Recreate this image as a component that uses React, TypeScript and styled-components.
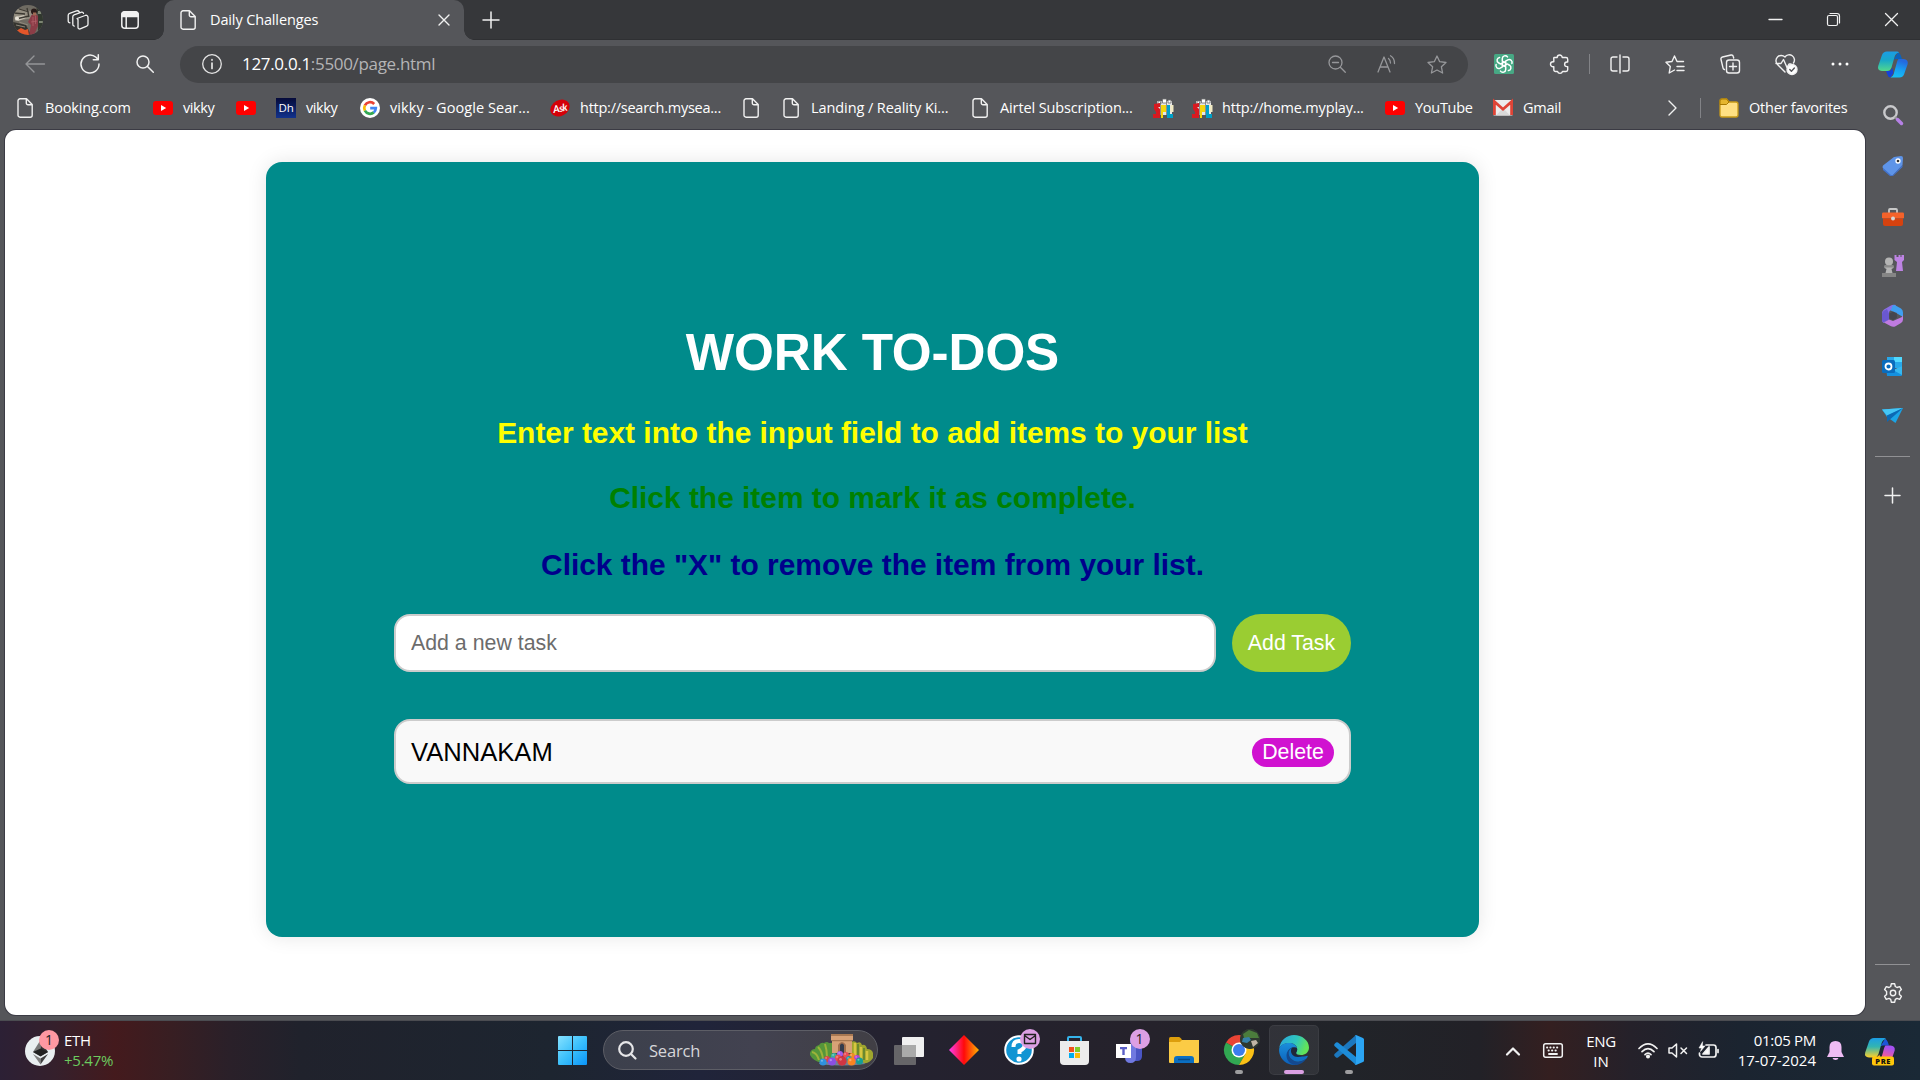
import React from "react";
import styled, { createGlobalStyle } from "styled-components";

const Global = createGlobalStyle`
  * { box-sizing: border-box; }
  html, body { margin: 0; padding: 0; overflow: hidden; }
  body { font-family: "Open Sans", "Noto Sans", sans-serif; color: #fff; background: #55565a; }
  svg { display: block; flex: none; overflow: visible; }
`;

const Screen = styled.div`
  width: 1920px;
  height: 1080px;
  display: flex;
  flex-direction: column;
  background: #55565a;
`;

/* ---------- title bar ---------- */
const TitleBar = styled.div`
  height: 40px;
  flex: none;
  display: flex;
  background: #36373a;
  border-bottom: 1px solid #2f3033;
`;
const TitleTools = styled.div`
  width: 164px;
  padding-left: 2px;
  display: flex;
`;
const Cell = styled.div<{ $w: number }>`
  width: ${(p) => p.$w}px;
  flex: none;
  display: flex;
  align-items: center;
  justify-content: center;
`;
const Tab = styled.div`
  position: relative;
  width: 300px;
  height: 40px;
  display: flex;
  align-items: center;
  padding: 0 14px 0 16px;
  background: #55565a;
  border-radius: 10px 10px 0 0;
  &::before,
  &::after {
    content: "";
    position: absolute;
    bottom: 0;
    width: 10px;
    height: 10px;
  }
  &::before { left: -10px; background: radial-gradient(circle at 0 0, transparent 9.5px, #55565a 10px); }
  &::after { right: -10px; background: radial-gradient(circle at 100% 0, transparent 9.5px, #55565a 10px); }
`;
const TabTitle = styled.span`
  flex: 1;
  margin-left: 14px;
  font-size: 14.5px;
  letter-spacing: -0.13px;
  line-height: 20px;
  white-space: nowrap;
`;
const Spacer = styled.div`
  flex: 1;
`;

/* ---------- toolbar ---------- */
const ToolBar = styled.div`
  height: 47px;
  flex: none;
  display: flex;
  align-items: center;
  padding: 1px 0 0 7px;
`;
const AddressBar = styled.div`
  width: 1288px;
  height: 37px;
  margin: 0 8px;
  border-radius: 19px;
  background: #444548;
  display: flex;
  align-items: center;
  padding: 0 6px 0 22px;
`;
const Url = styled.span`
  margin: -1px 0 0 20px;
  font-size: 17px;
  line-height: 24px;
  letter-spacing: -0.32px;
  color: #b4b4b6;
  white-space: nowrap;
  b { font-weight: 400; color: #fff; }
`;
const VRule = styled.div<{ $m?: number }>`
  width: 1px;
  height: 20px;
  margin: 0 ${(p) => p.$m ?? 2}px;
  background: #828387;
`;

/* ---------- bookmarks ---------- */
const Bookmarks = styled.div`
  height: 43px;
  flex: none;
  display: flex;
  align-items: center;
  padding: 0 0 1px 15px;
`;
const Bookmark = styled.div<{ $w: number }>`
  width: ${(p) => p.$w}px;
  flex: none;
  display: flex;
  align-items: center;
`;
const BookmarkIcon = styled.span`
  width: 20px;
  flex: none;
  display: flex;
  justify-content: center;
`;
const BookmarkName = styled.span<{ $ls?: number }>`
  margin-left: 10px;
  font-size: 14.5px;
  line-height: 20px;
  letter-spacing: ${(p) => p.$ls ?? -0.4}px;
  white-space: nowrap;
`;
const SiteTile = styled.span`
  width: 20px;
  height: 20px;
  background: linear-gradient(#060b3a, #12328c);
  font-size: 11.5px;
  line-height: 19px;
  letter-spacing: -0.2px;
  text-align: center;
`;

/* ---------- page ---------- */
const Body = styled.div`
  flex: 1;
  display: flex;
  padding: 0 0 5px 5px;
`;
const Page = styled.main`
  width: 1860px;
  height: 885px;
  flex: none;
  background: #fff;
  border-radius: 11px;
  box-shadow: 0 0 0 1px #3b3b44;
  padding: 32px 0 0 261px;
  font-family: "Liberation Sans", Arial, sans-serif;
`;
const Card = styled.section`
  width: 1213px;
  height: 775px;
  padding: 162px 128px 0;
  border-radius: 16px;
  background: #008b8b;
  box-shadow: 0 0 20px rgba(0, 0, 0, 0.1);
  display: flex;
  flex-direction: column;
`;
const Heading = styled.h1`
  margin: 0;
  font-size: 51.2px;
  line-height: 58px;
  letter-spacing: -0.1px;
  text-align: center;
  color: #fff;
`;
const Hint = styled.h3<{ $color: string; $top: number }>`
  margin: ${(p) => p.$top}px 0 0;
  font-size: 29.95px;
  line-height: 36px;
  letter-spacing: -0.02px;
  text-align: center;
  color: ${(p) => p.$color};
`;
const TaskForm = styled.div`
  display: flex;
  gap: 16px;
  margin-top: 31px;
  height: 58px;
`;
const TaskInput = styled.input`
  width: 822px;
  padding: 0 15px;
  border: 2px solid #ccc;
  border-radius: 16px;
  background: #fff;
  font-family: inherit;
  font-size: 21.33px;
  &::placeholder { color: #6c6c6c; opacity: 1; }
`;
const AddButton = styled.button`
  width: 119px;
  padding: 0;
  border: 0;
  border-radius: 29px;
  background: #9acd32;
  color: #fff;
  font-family: inherit;
  font-size: 21.33px;
  white-space: nowrap;
`;
const TaskItem = styled.div`
  margin-top: 47px;
  height: 65px;
  padding: 1px 15px 0;
  border: 2px solid #ccc;
  border-radius: 16px;
  background: #f9f9f9;
  color: #000;
  font-size: 25.6px;
  display: flex;
  align-items: center;
  justify-content: space-between;
`;
const DeleteButton = styled.button`
  width: 82px;
  height: 29px;
  padding: 0;
  border: 0;
  border-radius: 16px;
  background: #d012d0;
  color: #fff;
  font-family: inherit;
  font-size: 21.33px;
  line-height: 27px;
`;

/* ---------- side bar ---------- */
const SideBar = styled.aside`
  flex: 1;
  display: flex;
  flex-direction: column;
  align-items: center;
  margin: -40px 0 -5px;
`;
const SideCell = styled.div<{ $h: number }>`
  height: ${(p) => p.$h}px;
  flex: none;
  display: flex;
  align-items: center;
`;
const HRule = styled.div`
  width: 35px;
  height: 1px;
  background: #919194;
`;

/* ---------- task bar ---------- */
const TaskBar = styled.footer`
  height: 60px;
  flex: none;
  display: flex;
  border-top: 1px solid #4b4c51;
  background: linear-gradient(90deg, #2c2035 0, #35202c 55px, #441a1d 115px, #381e22 170px, #2a2029 230px, #20222c 300px, #1d2530 550px, #20243a 700px, #242230 880px, #25222b 1150px, #212429 1340px, #222127 1480px, #341f20 1550px, #25212a 1630px, #1b2430 1740px, #1a2936 1920px);
`;
const Widget = styled.div`
  width: 546px;
  display: flex;
  align-items: center;
  padding: 0 0 0 25px;
`;
const Stack = styled.div<{ $w: number; $right?: boolean }>`
  width: ${(p) => p.$w}px;
  flex: none;
  display: flex;
  flex-direction: column;
  justify-content: center;
  align-items: ${(p) => (p.$right ? "flex-end" : "center")};
  font-size: 15px;
  line-height: 20px;
  padding-bottom: ${(p) => (p.$right ? 1 : 0)}px;
  white-space: nowrap;
`;
const Ticker = styled.div`
  margin: 0 0 2px 9px;
  font-size: 15px;
  line-height: 20px;
  letter-spacing: -0.25px;
  em { display: block; font-style: normal; color: #6ccb5f; }
`;
const Line = styled.span<{ $ls: number }>`
  letter-spacing: ${(p) => p.$ls}px;
`;
const BadgeHost = styled.span`
  position: relative;
  display: flex;
`;
const Badge = styled.span<{ $bg: string; $x: number; $y: number }>`
  position: absolute;
  left: ${(p) => p.$x}px;
  top: ${(p) => p.$y}px;
  width: 20px;
  height: 20px;
  border-radius: 50%;
  background: ${(p) => p.$bg};
  color: #222;
  font-size: 14px;
  line-height: 20px;
  text-align: center;
  display: flex;
  align-items: center;
  justify-content: center;
`;
const AppSlot = styled.div<{ $active?: boolean }>`
  position: relative;
  width: 50px;
  height: 50px;
  margin: 4px 2.5px 0;
  flex: none;
  display: flex;
  align-items: center;
  justify-content: center;
  border-radius: 5px;
  background: ${(p) => (p.$active ? "rgba(255,255,255,.07)" : "none")};
  box-shadow: ${(p) => (p.$active ? "inset 0 0 0 1px rgba(255,255,255,.05)" : "none")};
`;
const Running = styled.span<{ $active?: boolean }>`
  position: absolute;
  left: ${(p) => (p.$active ? 15 : 21)}px;
  bottom: 1px;
  width: ${(p) => (p.$active ? 20 : 8)}px;
  height: 4px;
  border-radius: 2px;
  background: ${(p) => (p.$active ? "#dba0e3" : "#9d9d9f")};
`;
const SearchBox = styled.div`
  width: 275px;
  height: 40px;
  margin: 9px 8px 0 5px;
  flex: none;
  border-radius: 20px;
  border: 1px solid #5d5e66;
  background: linear-gradient(90deg, #3c404c, #424250 55%, #413f45);
  display: flex;
  align-items: center;
  padding: 0 4px 0 14px;
`;
const SearchText = styled.span`
  flex: 1;
  margin-left: 12px;
  padding-top: 1px;
  font-size: 16.500px;
  line-height: 24px;
  letter-spacing: -0.2px;
  color: #d6d6d9;
`;

/* ---------- icons ---------- */
type IconProps = {
  w: number;
  h: number;
  c?: string;
  sw?: number;
  children: React.ReactNode;
};
const Stroke = ({ w, h, c = "#f1f1f1", sw = 1.4, children }: IconProps) => (
  <svg width={w} height={h} viewBox={`0 0 ${w} ${h}`} fill="none" stroke={c} strokeWidth={sw} strokeLinecap="round" strokeLinejoin="round">
    {children}
  </svg>
);
const Pict = ({ w, h, children }: IconProps) => (
  <svg width={w} height={h} viewBox={`0 0 ${w} ${h}`}>{children}</svg>
);

const FileIcon = () => (
  <Stroke w={16} h={20}>
    <path d="M3 .8h6.5l5.700 5.700v10.700a2 2 0 0 1-2 2H3a2 2 0 0 1-2-2V2.800a2 2 0 0 1 2-2zM9.300 1v4a1.700 1.700 0 0 0 1.700 1.700h4" />
  </Stroke>
);
const YouTubeIcon = () => (
  <Pict w={20} h={14}>
    <rect width="20" height="14" rx="3" fill="#f00" />
    <path d="M8 4l5.200 3L8 10z" fill="#fff" />
  </Pict>
);
const Avatar = () => (
  <Pict w={30} h={30}>
    <defs><clipPath id="av"><circle cx="15" cy="15" r="15" /></clipPath></defs>
    <g clipPath="url(#av)">
      <rect width="30" height="30" fill="#6f6b62" />
      <path d="M0 3l18 3 3 7L2 16z" fill="#938d80" />
      <path d="M2 12l9-2 2 3-8 3z" fill="#c9c3b5" />
      <path d="M1 8l11 1M3 14l13-3M6 4l10 3M14 3l2 9" stroke="#3c3932" strokeWidth="1.300" />
      <path d="M0 17l13 3 5 10H0z" fill="#35342f" />
      <path d="M3 20l9 2M6 17l9 3" stroke="#8d877a" />
      <path d="M23 0h7v30h-5V13z" fill="#30382e" />
      <path d="M25 6h3v3h-3zM26 16h4v2h-4z" fill="#7d8573" />
      <path d="M18.500 10q4-2 6.500 1v10l-4 9h-5l2-10-3-3z" fill="#8b3d47" />
      <path d="M20 12v9M22.500 11v8M18 17l6-1" stroke="#b4636c" strokeWidth=".7" />
      <circle cx="21" cy="6.500" r="3" fill="#2a1c1a" />
      <path d="M20 7.500h3v3h-3z" fill="#a16a55" />
      <path d="M3 26l5-3 4 2 3-1 1 6H4z" fill="#e4562a" />
      <circle cx="4" cy="13.500" r="2" fill="#e6e1d6" />
    </g>
  </Pict>
);
const WorkspacesIcon = () => (
  <Stroke w={22} h={20} sw={1.300}>
    <path d="M9.300 8.500l8-3a2 2 0 0 1 2.900 1.700v7a2 2 0 0 1-1.300 1.900l-6.500 2.700a1.500 1.500 0 0 1-2.200-1.300V9.500z" transform="translate(.8 0)" />
    <path d="M7.200 16.200a1.800 1.800 0 0 1-1.400-2V6.700a2 2 0 0 1 1.300-1.900l7.500-2.700M3 12.800a1.800 1.800 0 0 1-1.800-2V5.300A2 2 0 0 1 2.600 3.400L9.500.9q2-.5 2.800 1M14.500 2.100a1.700 1.700 0 0 1 2 1.300" />
  </Stroke>
);
const TabMenuIcon = () => (
  <Stroke w={18} h={18} sw={1.500}>
    <rect x=".8" y=".8" width="16.400" height="16.400" rx="3" />
    <path d="M1 3.500A2.500 2.500 0 0 1 3.500 1h11A2.500 2.500 0 0 1 17 3.500V5.500H1z" fill="#f1f1f1" />
    <path d="M5.200 6v11" />
  </Stroke>
);
const SearchIcon = ({ c }: { c?: string }) => (
  <Stroke w={18} h={18} c={c} sw={1.500}>
    <circle cx="7" cy="7" r="6" />
    <path d="M11.500 11.500l5.800 5.700" />
  </Stroke>
);
const PlusIcon = ({ s }: { s: number }) => (
  <Stroke w={s} h={s} sw={1.500}><path d={`M${s / 2} 0v${s}M0 ${s / 2}h${s}`} /></Stroke>
);
const GptIcon = () => (
  <Pict w={20} h={20}>
    <rect width="20" height="20" rx="1.500" fill="#47a884" />
    <g fill="none" stroke="#fff" strokeWidth="1.500" strokeLinecap="round">
      {[0, 60, 120, 180, 240, 300].map((a) => (
        <path key={a} d="M8.300 7.200V4.600a2.900 2.900 0 0 1 5.200-1.700M8.300 7.200l3.600 2" transform={`rotate(${a} 10 10)`} />
      ))}
    </g>
  </Pict>
);
const SchoolIcon = () => (
  <Pict w={21} h={20}>
    <path d="M4 3h15v14H4z" fill="#e7e7e7" />
    <path d="M5 3h3v3H5zM9.500 1h4v4h-4zM15 2h3v3h-3z" fill="#fff" stroke="#6b6b6b" strokeWidth=".8" />
    <path d="M1 6l6-1v4H5l2 2v9H0v-4h3v-2L1 11z" fill="#d71920" />
    <path d="M8 7h5v7h-3v6H8z" fill="#f4d60c" />
    <path d="M14 7h3v9h3v4h-6z" fill="#00a0c8" />
    <path d="M17.500 7h3v7h-3z" fill="#f0e9c3" />
    <path d="M7.500 4v15M13.500 5v14" stroke="#555" strokeWidth=".6" />
  </Pict>
);
const GoogleIcon = () => (
  <Pict w={20} h={20}>
    <circle cx="10" cy="10" r="10" fill="#fff" />
    <g fill="none" strokeWidth="2.700">
      <path d="M14.200 6A5.800 5.800 0 0 0 4.900 7.300" stroke="#ea4335" />
      <path d="M4.900 7.300a5.800 5.800 0 0 0 0 5.400" stroke="#fbbc05" />
      <path d="M4.900 12.700a5.800 5.800 0 0 0 8.900 1.700" stroke="#34a853" />
      <path d="M13.800 14.400A5.800 5.800 0 0 0 15.800 10.200H10.200" stroke="#4285f4" />
    </g>
  </Pict>
);
const AskIcon = () => (
  <Pict w={20} h={18}>
    <ellipse cx="10" cy="9" rx="10.200" ry="7.800" transform="rotate(-28 10 9)" fill="#d40008" />
    <text x="10" y="12.800" fill="#fff" fontSize="10" fontStyle="italic" fontWeight="700" textAnchor="middle" fontFamily="Lato, sans-serif" letterSpacing="-.6" transform="rotate(-10 10 9)">Ask</text>
  </Pict>
);
const GmailIcon = () => (
  <Pict w={20} h={16}>
    <rect width="20" height="15.500" rx="1.500" fill="#ececec" />
    <path d="M3 15.500L10 8l7 7.500z" fill="#d9d9d9" />
    <path d="M1.400 15V1.700L10 9.200l8.600-7.500V15" fill="none" stroke="#df4436" strokeWidth="2.800" />
  </Pict>
);
const FavFolder = () => (
  <Pict w={20} h={20}>
    <path d="M1 3q0-2 2-2h4.500l2.500 3h7q2 0 2 2v11q0 2-2 2H3q-2 0-2-2z" fill="#ffe083" stroke="#c89a18" strokeWidth="1.300" />
    <path d="M1 6.500h6.500L10 4 7.500 1H3Q1 1 1 3z" fill="#e5b62e" stroke="#a87a00" />
  </Pict>
);
const CopilotIcon = ({ pre }: { pre?: boolean }) => {
  const id = pre ? "cp" : "ce";
  return (
    <svg width={30} height={pre ? 28 : 27} viewBox="0 0 30 27">
      <defs>
        <linearGradient id={id + "a"} x1="0" y1="0" x2="0" y2="1">
          <stop offset="0" stopColor="#1b9de6" /><stop offset=".45" stopColor={pre ? "#33b5b0" : "#19a8c8"} />
          <stop offset="1" stopColor={pre ? "#ffd028" : "#52d88c"} />
        </linearGradient>
        <linearGradient id={id + "b"} x1="0" y1="1" x2=".3" y2="0">
          <stop offset="0" stopColor={pre ? "#ff7a4d" : "#18c5f5"} /><stop offset=".5" stopColor={pre ? "#ef5a9c" : "#17a3f3"} />
          <stop offset="1" stopColor={pre ? "#a551f0" : "#2469de"} />
        </linearGradient>
      </defs>
      <path d="M20 1.500q2 .6 2.800 3L24 8h-6q-3 0-4 3z" fill={pre ? "#1d55d8" : "#0b62bb"} />
      <path d="M9 .500h10q1.500 0 2 1.200-3.500.2-4.500 4.300l-3 10.500Q12.200 20 9 20H4q-5-.5-3.800-5L4 4Q5.200.5 9 .5z" fill={`url(#${id}a)`} />
      <path d="M8 20h4l2.500-3 1 5-3 4.500q-2.500-.2-3.200-3z" fill={pre ? "#ffb02e" : "#1443d8"} />
      <path d="M20.500 8h5q5 .5 4.200 5L26 23.500q-1.200 3-4.500 3h-9q2.500-1 3.200-3.500L19 11q.5-2 1.500-3z" fill={`url(#${id}b)`} />
      {pre && <rect x="7" y="19" width="22" height="9" rx="2" fill="#ffc60a" />}
      {pre && <text x="18.200" y="26.300" fontSize="7.500" fontWeight="800" textAnchor="middle" fill="#111" fontFamily="Open Sans, sans-serif" letterSpacing=".6">PRE</text>}
    </svg>
  );
};
const EdgeIcon = () => (
  <Pict w={30} h={30}>
    <defs>
      <linearGradient id="e1" x1="0" y1="0" x2="1" y2=".3"><stop offset="0" stopColor="#2aa5e0" /><stop offset=".6" stopColor="#2fc6bd" /><stop offset="1" stopColor="#62e35a" /></linearGradient>
      <linearGradient id="e2" x1="0" y1="0" x2="0" y2="1"><stop offset="0" stopColor="#1a8fdc" /><stop offset="1" stopColor="#0c5fb8" /></linearGradient>
    </defs>
    <path d="M.2 13C1.500 5 8 0 15 0c8 0 15 5.500 15 12.500 0 5-4 7.500-8 7.500-3 0-5-1-5-2 0-.8 1.200-1.500 1.200-4C18.200 11 15 8 10.500 8 5 8 1 11 .2 13z" fill="url(#e1)" />
    <path d="M.2 13.500C1.500 9.500 6 8 10 8c4 0 7 2 8 5-3-2-8-.5-9 4-1.200 6 4 12 10.500 12.300C17 30.300 13 30 10 29 3.500 26.500-.7 20 .2 13.500z" fill="url(#e2)" />
    <path d="M13 12.700c-4 2-4.500 6.500-1.700 10.300 3.700 4.500 10.700 5 16.200.6C24 29 18.500 31 14 29.500 8.500 27.500 6.500 22 8 17.500c1-2.800 3-4.500 5-4.800z" fill="#14498f" />
    <path d="M17 18c0 1.500 2.500 3.500 6 3.500 2.500 0 4-.8 5.300-.8 1 0 .3 1.500-.8 2.900-5.500 4.400-12.500 3.900-16.200-.6-2.800-3.800-2.300-8.300 1.700-10.300 3.500-.8 5.200 1.300 5.200 2.300S17 17 17 18z" fill="#0f6fc4" />
    <path d="M13 12.700c3.500-.8 5.200.3 5.200 1.300 0 2.500-1.200 3.200-1.200 4 0 1 2 3 6 3.200l-4 .8c-5 0-7-3.500-7-6 0-1.500.4-2.600 1-3.300z" fill="#20263a" />
  </Pict>
);
const ChromeIcon = () => (
  <Pict w={30} h={30}>
    <path d="M15 15L2 7.500A15 15 0 0 1 28 7.500z" fill="#e94435" />
    <path d="M15 15L2 7.500A15 15 0 0 0 15 30l6.500-11z" fill="#31a852" />
    <path d="M15 15h0l6.500 3.800L15 30A15 15 0 0 0 28 7.500H15z" fill="#fbc116" />
    <circle cx="15" cy="15" r="7.500" fill="#fff" />
    <circle cx="15" cy="15" r="6" fill="#3b7ded" />
  </Pict>
);
const VsCodeIcon = () => (
  <Pict w={30} h={30}>
    <path d="M22 0v8L4 22.500q-1 .5-2 0L.5 21q-.8-1 0-2z" fill="#1c78be" />
    <path d="M22 30v-8L4 7.500q-1-.5-2 0L.500 9q-.8 1 0 2z" fill="#1d8cd8" />
    <path d="M22 0l7 3q1 .5 1 1.500v21q0 1-1 1.500l-7 3q-1 0-1.500-.7 1.500.5 1.500-1.300V2q0-1.800-1.500-1.300Q21 0 22 0z" fill="#2ba5f3" />
  </Pict>
);
const ArchIcon = () => {
  const balls: [number, number, number, string][] = [
    [17, 25, 3, "#d84747"], [24, 22, 3, "#3bb0a0"], [30, 20, 3, "#a55be8"], [36, 21, 3, "#ea4d56"], [42, 22, 3, "#f08b24"], [47, 24, 3, "#b83fd0"],
    [28, 24, 3.2, "#e85050"], [39, 25, 3, "#2298a8"], [13, 28, 3.5, "#2f92dd"], [22, 27.5, 4, "#8b4fe3"], [32, 27, 4.7, "#cf3643"], [41.500, 27.500, 4, "#fb8420"], [49.500, 27, 3.500, "#159e96"],
  ];
  return (
    <Pict w={63} h={32}>
      <path d="M9 30q23 3 46 0l-4-7H13z" fill="#6e8196" />
      <path d="M0 19q1-4 5-4 0-3 4-4 2-3 5-2 3-2 5 0h3v14l-10 6q-9-2-12-8z" fill="#55963a" />
      <path d="M2 18q5 1 7 8M8 13q4 4 5 12M15 10q2 6 2 13" stroke="#9cb23a" strokeWidth="2" fill="none" />
      <path d="M41 8q4-2 6 1 4-2 5 2 4-1 5 4 5 0 6 4v5q-4 6-9 5l-13-9z" fill="#9fa52e" />
      <path d="M45 9v13M51 13v12M57 17v9" stroke="#d7c640" strokeWidth="2.500" />
      <path d="M48 10v13M54 14v12" stroke="#597f30" strokeWidth="1.500" />
      <path d="M21 0h22v6l-1 1v12H22V7l-1-1z" fill="#d7a277" />
      <path d="M21 0h22v2H21zM22 6h20v1.300H22z" fill="#a77852" />
      <path d="M28 19v-8q4-6 8 0v8z" fill="#a26f4d" />
      <path d="M30 19v-8q2-3 4 0v8z" fill="#343b4c" />
      {balls.map(([x, y, r, f], i) => (
        <g key={i}>
          <circle cx={x} cy={y} r={r} fill={f} />
          <circle cx={x - r * 0.3} cy={y - r * 0.35} r={r * 0.3} fill="#fff" opacity=".35" />
        </g>
      ))}
    </Pict>
  );
};

/* ---------- data ---------- */
const bookmarks: { w: number; icon: React.ReactNode; name?: string; ls?: number }[] = [
  { w: 138, icon: <FileIcon />, name: "Booking.com", ls: -0.18 },
  { w: 83, icon: <YouTubeIcon />, name: "vikky" },
  { w: 40, icon: <YouTubeIcon /> },
  { w: 84, icon: <SiteTile>Dh</SiteTile>, name: "vikky" },
  { w: 190, icon: <GoogleIcon />, name: "vikky - Google Sear...", ls: 0.06 },
  { w: 191, icon: <AskIcon />, name: "http://search.mysea...", ls: -0.25 },
  { w: 40, icon: <FileIcon /> },
  { w: 189, icon: <FileIcon />, name: "Landing / Reality Ki...", ls: -0.08 },
  { w: 183, icon: <FileIcon />, name: "Airtel Subscription...", ls: -0.12 },
  { w: 39, icon: <SchoolIcon /> },
  { w: 193, icon: <SchoolIcon />, name: "http://home.myplay...", ls: -0.18 },
  { w: 108, icon: <YouTubeIcon />, name: "YouTube", ls: -0.28 },
  { w: 166, icon: <GmailIcon />, name: "Gmail", ls: -0.25 },
];

export default function App() {
  return (
    <Screen>
      <Global />
      <TitleBar>
        <TitleTools>
          <Cell $w={52}><Avatar /></Cell>
          <Cell $w={48}><WorkspacesIcon /></Cell>
          <Cell $w={56}><TabMenuIcon /></Cell>
        </TitleTools>
        <Tab>
          <FileIcon />
          <TabTitle>Daily Challenges</TabTitle>
          <Stroke w={12} h={12} sw={1.400}><path d="M1 1l10 10M11 1L1 11" /></Stroke>
        </Tab>
        <Cell $w={53}><PlusIcon s={16} /></Cell>
        <Spacer />
        <Cell $w={57}><Stroke w={13} h={13} sw={1.300}><path d="M0 6.500h13" /></Stroke></Cell>
        <Cell $w={58}>
          <Stroke w={13} h={13} sw={1.200}>
            <rect x=".5" y="2.500" width="10" height="10" rx="1.500" />
            <path d="M3 .5h7a2.500 2.500 0 0 1 2.500 2.500v7" />
          </Stroke>
        </Cell>
        <Cell $w={58}><Stroke w={13} h={13} sw={1.300}><path d="M.5.5l12 12M12.500.5l-12 12" /></Stroke></Cell>
      </TitleBar>

      <ToolBar>
        <Cell $w={55}><Stroke w={20} h={18} c="#949598"><path d="M9 1L1 9l8 8M1 9h18.500" /></Stroke></Cell>
        <Cell $w={55}>
          <Stroke w={20} h={20} sw={1.500}><path d="M19 10a9 9 0 1 1-3-6.700L18 5.500M18.300.8v5h-5" /></Stroke>
        </Cell>
        <Cell $w={55}><SearchIcon /></Cell>
        <AddressBar>
          <Stroke w={20} h={20} c="#e4e4e4" sw={1.300}><circle cx="10" cy="10" r="9.300" /><path d="M10 9v5.500M10 5.700v.4" strokeWidth="1.700" /></Stroke>
          <Url><b>127.0.0.1</b>:5500/page.html</Url>
          <Spacer />
          <Cell $w={50}>
            <Stroke w={18} h={18} c="#96979a" sw={1.300}><circle cx="7.500" cy="7.500" r="6.500" /><path d="M12.300 12.300l5 5M4.500 7.500h6" /></Stroke>
          </Cell>
          <Cell $w={50}>
            <Stroke w={20} h={18} c="#96979a" sw={1.300}><path d="M1 17L7 2l6 15M3.200 12h7.600M11.500 3.500q2 1.500 2 4.500M13.500.8q4 2.200 4 7.700" /></Stroke>
          </Cell>
          <Cell $w={50}>
            <Stroke w={20} h={19} c="#96979a" sw={1.300}><path d="M10 1l2.700 5.700 6.300.8-4.600 4.300 1.200 6.200L10 15l-5.600 3 1.200-6.200L1 7.500l6.300-.8z" /></Stroke>
          </Cell>
        </AddressBar>
        <Cell $w={55}><GptIcon /></Cell>
        <Cell $w={56}>
          <Stroke w={19} h={20}><path d="M4 3.500h3.200a2.500 2.500 0 0 1 5 0H16a1.700 1.700 0 0 1 1.700 1.700V8h-.8a2.200 2.200 0 0 0 0 4.600h.8v3.200a1.700 1.700 0 0 1-1.700 1.700h-3.500a2.600 2.600 0 0 1-5 0H5.500a1.700 1.700 0 0 1-1.700-1.700v-3H3a2.500 2.500 0 0 1 0-5h.8V5A1.500 1.500 0 0 1 4 3.500z" /></Stroke>
        </Cell>
        <VRule />
        <Cell $w={55}>
          <Stroke w={20} h={18}><path d="M7 2H3a2 2 0 0 0-2 2v10a2 2 0 0 0 2 2h4M13 2h4a2 2 0 0 1 2 2v10a2 2 0 0 1-2 2h-4M10 0v18" /></Stroke>
        </Cell>
        <Cell $w={55}>
          <Stroke w={20} h={19}><path d="M18.500 6.500H12L9.500 1 7 6.500l-6 .8 4.300 4.200L4.200 18l5.300-3M12 11.500h7M12 15.500h7" /></Stroke>
        </Cell>
        <Cell $w={56}>
          <Stroke w={20} h={20}>
            <path d="M4.500 15.500a2 2 0 0 1-1.500-1.700L1 5.500A2 2 0 0 1 2.500 3L11 1a2 2 0 0 1 2.300 1.500l.4 1.500" />
            <rect x="6.500" y="6" width="13" height="13" rx="2.500" />
            <path d="M13 9v7M9.500 12.500h7" />
          </Stroke>
        </Cell>
        <Cell $w={55}>
          <Stroke w={22} h={21}>
            <path d="M10 18L2.500 10.500a5.200 5.200 0 0 1 7.500-7.500 5.200 5.200 0 0 1 8.500 6M1 9.500h5l2.500-4 3.500 8 2-3.500h2" />
            <circle cx="17" cy="15.500" r="5" fill="#fff" />
            <path d="M14.800 15.600l1.600 1.600 3-3.200" stroke="#55565a" />
          </Stroke>
        </Cell>
        <Cell $w={54}>
          <Pict w={18} h={4}><g fill="#fff"><circle cx="2" cy="2" r="1.500" /><circle cx="9" cy="2" r="1.500" /><circle cx="16" cy="2" r="1.500" /></g></Pict>
        </Cell>
        <Cell $w={52}><CopilotIcon /></Cell>
      </ToolBar>

      <Bookmarks>
        {bookmarks.map((b, i) => (
          <Bookmark key={i} $w={b.w}>
            <BookmarkIcon>{b.icon}</BookmarkIcon>
            {b.name && <BookmarkName $ls={b.ls}>{b.name}</BookmarkName>}
          </Bookmark>
        ))}
        <Cell $w={28}><Stroke w={8} h={14}><path d="M0 0l7 7-7 7" /></Stroke></Cell>
        <VRule $m={13} />
        <Cell $w={5} />
        <Bookmark $w={130}>
          <BookmarkIcon><FavFolder /></BookmarkIcon>
          <BookmarkName $ls={-0.23}>Other favorites</BookmarkName>
        </Bookmark>
      </Bookmarks>

      <Body>
        <Page>
          <Card>
            <Heading>WORK TO-DOS</Heading>
            <Hint $color="#ffff00" $top={33}>Enter text into the input field to add items to your list</Hint>
            <Hint $color="#008000" $top={29}>Click the item to mark it as complete.</Hint>
            <Hint $color="#00008b" $top={31}>Click the "X" to remove the item from your list.</Hint>
            <TaskForm>
              <TaskInput placeholder="Add a new task" />
              <AddButton>Add Task</AddButton>
            </TaskForm>
            <TaskItem>
              <span>VANNAKAM</span>
              <DeleteButton>Delete</DeleteButton>
            </TaskItem>
          </Card>
        </Page>
        <SideBar>
          <SideCell $h={50}>
            <Pict w={20} h={20}><circle cx="7.500" cy="7.500" r="6.200" fill="none" stroke="#c9c9cc" strokeWidth="2.400" /><path d="M12 12l2 2" stroke="#999" strokeWidth="2" /><path d="M14.500 14.500l4 4" stroke="#b681e6" strokeWidth="3.500" strokeLinecap="round" /></Pict>
          </SideCell>
          <SideCell $h={52}>
            <Pict w={22} h={20}><path d="M12 1l7-1q2 0 2 2l-.5 7-9.500 10q-1.500 1.500-3 0L1 12.500q-1-1.500 0-3z" fill="#5e94e8" /><path d="M1 12l8 7q1 .5 2 0l9.500-10V11L11 20H8l-7-6z" fill="#4274d0" /><circle cx="16" cy="5" r="2" fill="#333" stroke="#fff" strokeWidth="1.300" /></Pict>
          </SideCell>
          <SideCell $h={49}>
            <Pict w={22} h={18}><path d="M7 5V2q0-1 1-1h6q1 0 1 1v3" fill="none" stroke="#c8c8c8" strokeWidth="1.800" /><rect y="4.500" width="22" height="6" rx="1.200" fill="#f4622a" /><path d="M1 10.500h20V16q0 2-2 2H3q-2 0-2-2z" fill="#d6420f" /><circle cx="11" cy="10.500" r="2" fill="#d5d5d5" /></Pict>
          </SideCell>
          <SideCell $h={49}>
            <Pict w={22} h={22}><path d="M12.500 0h2v2h2V0h2v2h1V0H22v5l-2 2 1 9h-7l1-9-2.500-2z" fill="#bd83e3" /><g fill="#b4b4b4"><circle cx="7" cy="6.500" r="4" /><path d="M2.500 10.500h9v2.500l-2 1 1 4h-7l1-4-2-1z" /></g><path d="M2.500 10.500h9v2h-9z" fill="#8a8a8a" /><path d="M0 18h14v4H0z" fill="#858585" /></Pict>
          </SideCell>
          <SideCell $h={51}>
            <Pict w={21} h={22}>
              <path d="M8 1L2 4.500Q0 6 0 8v7q0 2 1.500 3L7 15V8q0-2 2-3l3-1.500L14 0q-3-1-6 1z" fill="#8a6fe6" />
              <path d="M11 0q2 0 3.500 1L19 3.500q2 1.500 2 4V12l-6-3.500V8L8.500 5.500z" fill="#3f9ff0" />
              <path d="M21 10v4.500q0 2-2 3.500l-5.500 3.300Q11 22.500 8.500 21L2 17.500l5-3 4 1.500 9-4z" fill="#bf7be0" />
              <path d="M1 17.500l6-3V9L5 4 1.500 6Q0 8 0 9v6z" fill="#6a58d0" />
              <path d="M7.500 8.500L11 6.800l3.800 2v4.300L11 15.300l-3.500-2z" fill="#45464d" />
            </Pict>
          </SideCell>
          <SideCell $h={50}>
            <Pict w={21} h={19}><path d="M5 0h15v11H5z" fill="#28a8ea" /><path d="M12 0h8v5h-8z" fill="#50d9ff" /><path d="M4 9l8 5 8-5v9q0 1-1 1H5z" fill="#1490df" /><path d="M20 9v9L11 13z" fill="#35b8f1" /><rect y="3" width="13" height="13" rx="1.500" fill="#0a6cbd" /><circle cx="6.500" cy="9.500" r="3" fill="none" stroke="#fff" strokeWidth="1.800" /></Pict>
          </SideCell>
          <SideCell $h={49}>
            <Pict w={21} h={15}><path d="M0 1.500L21 0l-7.500 15L5 9z" fill="#1ba4e6" /><path d="M0 1.500L21 0 5 7.500z" fill="#45c6f5" /><path d="M21 0L5 7.500V14l4-3.500z" fill="#0c69b4" /></Pict>
          </SideCell>
          <SideCell $h={32}><HRule /></SideCell>
          <SideCell $h={46}><PlusIcon s={15} /></SideCell>
          <Spacer />
          <HRule />
          <SideCell $h={55}>
            <Stroke w={20} h={20}>
              <path d="M8.300.8h3.400l.6 2.700 1.700 1 2.700-.9 1.700 3-2 1.900v2.900l2 1.900-1.700 3-2.700-.9-1.700 1-.6 2.800H8.300l-.6-2.800-1.700-1-2.700.9-1.700-3 2-1.900V8.500l-2-1.900 1.700-3 2.700.9 1.700-1z" />
              <circle cx="10" cy="10" r="2.700" />
            </Stroke>
          </SideCell>
        </SideBar>
      </Body>

      <TaskBar>
        <Widget>
          <BadgeHost>
            <Pict w={30} h={30}>
              <circle cx="15" cy="15" r="15" fill="#e9eef0" />
              <path d="M15.500 4L8 16l7.500 4z" fill="#777" /><path d="M15.500 4L23 16l-7.500 4z" fill="#333" />
              <path d="M8 16l7.500-3.500L23 16l-7.500 4.500z" fill="#222" />
              <path d="M8 18l7.500 4.500v6z" fill="#808080" /><path d="M23 18l-7.500 4.500v6z" fill="#3e3e3e" />
            </Pict>
            <Badge $bg="#ff98a2" $x={14} $y={-6}>1</Badge>
          </BadgeHost>
          <Ticker>ETH<em>+5.47%</em></Ticker>
        </Widget>
        <Cell $w={52}>
          <Pict w={29} h={29}>
            <defs><linearGradient id="win" x1="0" y1="0" x2="1" y2="1"><stop offset="0" stopColor="#86e2ff" /><stop offset=".5" stopColor="#3cc0fb" /><stop offset="1" stopColor="#0a94f8" /></linearGradient></defs>
            <path d="M0 1q0-1 1-1h13v14H0zM15 0h13q1 0 1 1v13H15zM0 15h14v14H1q-1 0-1-1zM15 15h14v13q0 1-1 1H15z" fill="url(#win)" />
          </Pict>
        </Cell>
        <SearchBox>
          <Stroke w={19} h={19} c="#e6e6e8" sw={2.200}><circle cx="8" cy="8" r="6.800" /><path d="M13 13l4.500 4.500" /></Stroke>
          <SearchText>Search</SearchText>
          <ArchIcon />
        </SearchBox>
        <Cell $w={46}>
          <Pict w={30} h={28}><rect x="8" width="22" height="20" rx="1" fill="#f0f0f0" /><rect y="8" width="22" height="20" rx="1" fill="#777" opacity=".8" /><path d="M8 8h14v12H8z" fill="#aaa" /></Pict>
        </Cell>
        <Cell $w={4.5} />
        <AppSlot>
          <Pict w={30} h={30}>
            <defs><linearGradient id="dia"><stop offset="0" stopColor="#ff3df0" /><stop offset=".5" stopColor="#ff0a0a" /><stop offset="1" stopColor="#ffb400" /></linearGradient></defs>
            <path d="M15 0l15 15-15 15L0 15z" fill="url(#dia)" />
          </Pict>
        </AppSlot>
        <AppSlot>
          <BadgeHost>
            <Pict w={30} h={30}><circle cx="15" cy="15" r="13.800" fill="#1295d3" stroke="#fff" strokeWidth="2" /><path d="M9.500 12q0-6 5.500-6t5.500 4.500q0 3-5 5.500v3" fill="none" stroke="#fff" strokeWidth="4" /><circle cx="15" cy="24" r="2.600" fill="#fff" /></Pict>
            <Badge $bg="#dc9fe4" $x={16} $y={-6}><Stroke w={12} h={10} c="#222" sw={1.400}><path d="M.5.5h11v9H.5zM.5 1.500L6 5.500l5.500-4" /></Stroke></Badge>
          </BadgeHost>
        </AppSlot>
        <AppSlot>
          <Pict w={29} h={29}>
            <path d="M8 6V2q0-1 1-1h11q1 0 1 1v4" fill="none" stroke="#35b3ea" strokeWidth="2" />
            <path d="M0 5h29v20q0 4-4 4H4q-4 0-4-4z" fill="#ececec" />
            <path d="M9 11h5v5H9z" fill="#f1511b" /><path d="M15 11h5v5h-5z" fill="#80cc28" /><path d="M9 17h5v5H9z" fill="#00adef" /><path d="M15 17h5v5h-5z" fill="#fbbc09" />
          </Pict>
        </AppSlot>
        <AppSlot>
          <BadgeHost>
            <Pict w={27} h={27}>
              <circle cx="18" cy="4" r="4" fill="#7b83eb" />
              <path d="M18 9h8v10q0 5-5 5h-3z" fill="#4a55c4" /><path d="M9 7h11v13q0 6-5.500 6T9 20z" fill="#7079e0" />
              <rect y="7" width="15" height="14" fill="#fff" /><path d="M4 10h7v2.300H8.700V18H6.300v-5.700H4z" fill="#5b5fc7" />
            </Pict>
            <Badge $bg="#dc9fe4" $x={14} $y={-8}>1</Badge>
          </BadgeHost>
        </AppSlot>
        <AppSlot>
          <Pict w={30} h={27}>
            <path d="M0 1.500Q0 0 1.500 0H10q1 0 2 1.500L13 3v5H0z" fill="#dd9e0c" />
            <path d="M0 5h11l2-2h17v22q0 1-1 1H1q-1 0-1-1z" fill="#fbcb45" />
            <path d="M5 26v-4q0-3 3-3h14q3 0 3 3v4z" fill="#0b6fc2" /><path d="M9 22.500h12" stroke="#084b85" strokeWidth="1.500" />
          </Pict>
        </AppSlot>
        <AppSlot>
          <BadgeHost>
            <ChromeIcon />
            <Badge $bg="#35463a" $x={16} $y={-6}>
              <Pict w={20} h={20}><circle cx="10" cy="10" r="10" fill="#2e3830" /><path d="M3 5l6-4 8 3 2 5H4z" fill="#4b7c3c" /><path d="M3 9l6-1 2 3-4 3-5-1z" fill="#357fa8" /><path d="M11 12l5-1 2 3-5 4z" fill="#c0b5a5" /></Pict>
            </Badge>
          </BadgeHost>
          <Running />
        </AppSlot>
        <AppSlot $active>
          <EdgeIcon />
          <Running $active />
        </AppSlot>
        <AppSlot>
          <VsCodeIcon />
          <Running />
        </AppSlot>
        <Spacer />
        <Cell $w={40}><Stroke w={14} h={8} sw={2.200}><path d="M1 7.500L7 1.500l6 6" /></Stroke></Cell>
        <Cell $w={40}>
          <Stroke w={20} h={15} sw={1.500}><rect x=".7" y=".7" width="18.600" height="13.600" rx="2" /><path d="M4 4.500h.3M7.300 4.500h.3M10.600 4.500h.3M14 4.500h.3M5.500 7.500h.3M9 7.500h.3M12.500 7.500h.3M6 11h8" strokeWidth="1.900" /></Stroke>
        </Cell>
        <Cell $w={8} />
        <Stack $w={40}>
          <Line $ls={-0.4}>ENG</Line>
          <Line $ls={0}>IN</Line>
        </Stack>
        <Cell $w={54}>
          <Stroke w={20} h={15} sw={1.700}><path d="M1 5.500q9-9 18 0M4 8.700q6-6 12 0M7 11.700q3-3 6 0" /><circle cx="10" cy="13.500" r="1.200" fill="#fff" /></Stroke>
        </Cell>
        <Cell $w={6}>
          <Stroke w={20} h={15} sw={1.500}><path d="M1 5h3l4.500-4v13L4 10H1zM13 5l5.500 5.500M18.500 5L13 10.500" /></Stroke>
        </Cell>
        <Cell $w={54}>
          <Stroke w={21} h={17} sw={1.700}><path d="M8 3h7.500a2.500 2.500 0 0 1 2.500 2.500v7a2.500 2.500 0 0 1-2.500 2.500H4a2.500 2.500 0 0 1-2.500-2.500V11M20 7.500v3" /><path d="M5 12l6-7v7z" fill="#fff" /><path d="M4.500 0L1 6h2.500L2.500 9.500 7 4H4.500z" fill="#fff" strokeWidth=".6" /></Stroke>
        </Cell>
        <Stack $w={81} $right>
          <Line $ls={-0.3}>01:05 PM</Line>
          <Line $ls={0}>17-07-2024</Line>
        </Stack>
        <Cell $w={38}>
          <Pict w={17} h={19}><path d="M8.500 0q6 0 6 6v5l2.500 5H0l2.500-5V6q0-6 6-6z" fill="#efbcf4" /><path d="M5.500 17h6q-.6 2-3 2t-3-2z" fill="#efbcf4" /></Pict>
        </Cell>
        <Cell $w={52}><CopilotIcon pre /></Cell>
        <Cell $w={14} />
      </TaskBar>
    </Screen>
  );
}
